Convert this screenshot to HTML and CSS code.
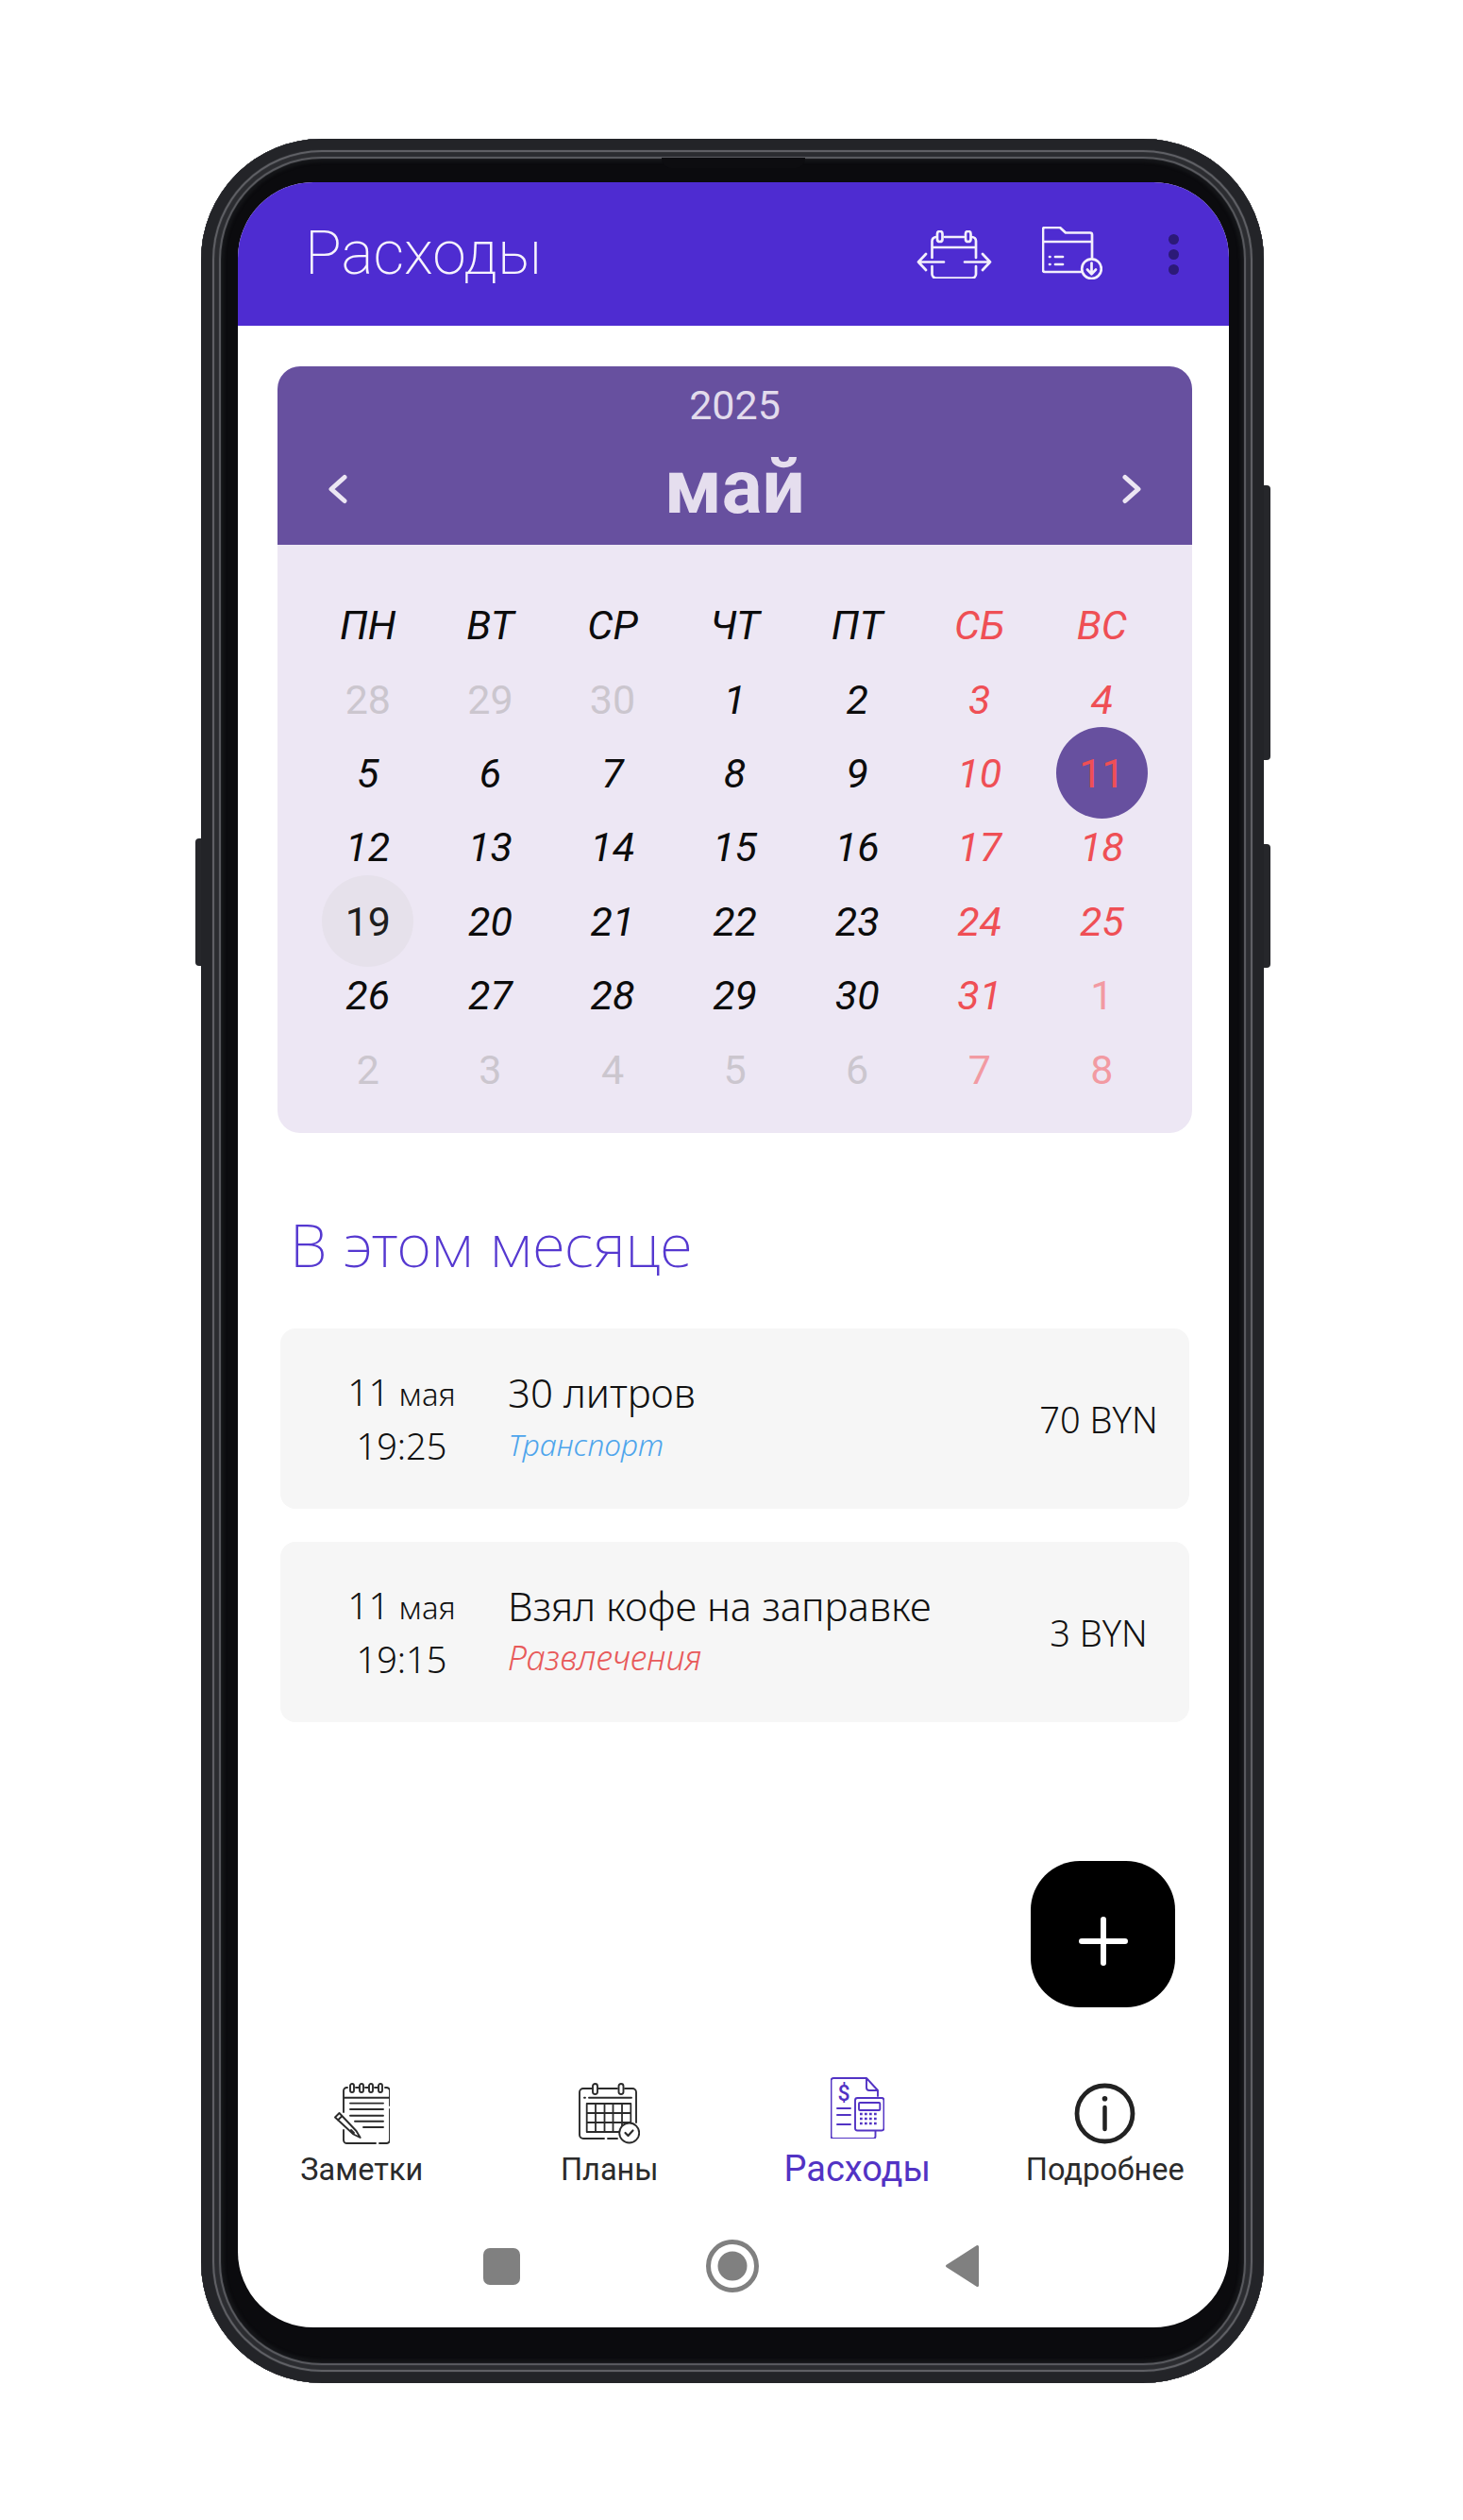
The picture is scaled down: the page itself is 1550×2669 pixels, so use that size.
FILE: index.html
```html
<!DOCTYPE html>
<html lang="ru">
<head>
<meta charset="utf-8">
<title>Расходы</title>
<link rel="stylesheet" href="styles.css">
</head>
<body>
<div class="phone">
  <span class="btn btn-left"></span>
  <span class="btn btn-right1"></span>
  <span class="btn btn-right2"></span>
  <span class="notch"></span>
  <div class="screen">
    <header class="appbar">
      <h1 class="appbar-title">Расходы</h1>
      <svg class="ic-cal" viewBox="0 0 80 51" width="80" height="51" fill="none" stroke="#f3effc" stroke-width="2.700" stroke-linecap="round" stroke-linejoin="round">
        <path d="M21 7h-.2a4.3 4.3 0 0 0-4.3 4.3V29M16.500 38v8.200a4.300 4.300 0 0 0 4.300 4.300h37.900a4.300 4.300 0 0 0 4.300-4.300V38M63 29V11.300A4.300 4.300 0 0 0 58.700 7H58M30 7h20M16.500 18H63"/>
        <rect x="22" y="1" width="5.500" height="11" rx="2.700"/>
        <rect x="52" y="1" width="5.500" height="11" rx="2.700"/>
        <path d="M29 33.500H2M10 25l-8 8.500 8 8.500M51 33.500h27M70 25l8 8.500-8 8.500"/>
      </svg>
      <svg class="ic-folder" viewBox="0 0 64 56" width="64" height="56" fill="none" stroke="#f3effc" stroke-width="2.700" stroke-linecap="round" stroke-linejoin="round">
        <path d="M41 48H3a2 2 0 0 1-2-2V3a2 2 0 0 1 2-2h16l6 5.500h26a2 2 0 0 1 2 2V33M1 16h52M14 32h8M14 40h8M8 32h.5M8 40h.5"/>
        <circle cx="52.500" cy="44.700" r="10.300"/>
        <path d="M52.500 38.500V50M48 45.500l4.500 4.800 4.500-4.800"/>
      </svg>
      <div class="dots"><i></i><i></i><i></i></div>
    </header>

    <section class="calendar">
      <div class="cal-head">
        <div class="cal-year">2025</div>
        <div class="cal-month-row">
          <svg class="chev" viewBox="0 0 22 34" width="22" height="34" fill="none" stroke="#ece6f3" stroke-width="5" stroke-linecap="round" stroke-linejoin="round"><path d="M18 4.500L4 17l14 12.500"/></svg>
          <div class="cal-month">май</div>
          <svg class="chev" viewBox="0 0 22 34" width="22" height="34" fill="none" stroke="#ece6f3" stroke-width="5" stroke-linecap="round" stroke-linejoin="round"><path d="M4 4.500L18 17 4 29.500"/></svg>
        </div>
      </div>
      <div class="cal-grid">
        <div class="c">ПН</div><div class="c">ВТ</div><div class="c">СР</div><div class="c">ЧТ</div><div class="c">ПТ</div><div class="c r">СБ</div><div class="c r">ВС</div>
        <div class="c o">28</div><div class="c o">29</div><div class="c o">30</div><div class="c">1</div><div class="c">2</div><div class="c r">3</div><div class="c r">4</div>
        <div class="c">5</div><div class="c">6</div><div class="c">7</div><div class="c">8</div><div class="c">9</div><div class="c r">10</div><div class="c sel"><span>11</span></div>
        <div class="c">12</div><div class="c">13</div><div class="c">14</div><div class="c">15</div><div class="c">16</div><div class="c r">17</div><div class="c r">18</div>
        <div class="c today"><span>19</span></div><div class="c">20</div><div class="c">21</div><div class="c">22</div><div class="c">23</div><div class="c r">24</div><div class="c r">25</div>
        <div class="c">26</div><div class="c">27</div><div class="c">28</div><div class="c">29</div><div class="c">30</div><div class="c r">31</div><div class="c ro">1</div>
        <div class="c o">2</div><div class="c o">3</div><div class="c o">4</div><div class="c o">5</div><div class="c o">6</div><div class="c ro">7</div><div class="c ro">8</div>
      </div>
    </section>

    <h2 class="section-title">В этом месяце</h2>

    <div class="items">
      <article class="item">
        <div class="item-date"><div><span class="d">11</span> <span class="m">мая</span></div><div>19:25</div></div>
        <div class="item-main"><div class="item-title">30 литров</div><div class="item-cat blue">Транспорт</div></div>
        <div class="item-sum">70 BYN</div>
      </article>
      <article class="item">
        <div class="item-date"><div><span class="d">11</span> <span class="m">мая</span></div><div>19:15</div></div>
        <div class="item-main"><div class="item-title">Взял кофе на заправке</div><div class="item-cat red">Развлечения</div></div>
        <div class="item-sum">3 BYN</div>
      </article>
    </div>

    <div class="fab-row">
      <button class="fab" type="button" aria-label="Добавить">
        <svg viewBox="0 0 52 52" width="52" height="52" fill="none" stroke="#fff" stroke-width="6" stroke-linecap="round"><path d="M26 3v46M3 26h46"/></svg>
      </button>
    </div>

    <nav class="tabs">
      <a class="tab">
        <span class="tab-ic">
        <svg viewBox="0 0 60 65" width="60" height="65" fill="none" stroke="#2b2b2b" stroke-width="1.900" stroke-linecap="round" stroke-linejoin="round">
          <path d="M15 5h-.5A3.500 3.500 0 0 0 11 8.500V31M11 50v10.500a3.500 3.500 0 0 0 3.500 3.500H45M49 64h7.500a3.500 3.500 0 0 0 3.500-3.500V28M60 24V8.500A3.500 3.500 0 0 0 56.500 5H55M11 15.700h49"/>
          <path d="M24 5h3M34 5h3M44 5h3"/>
          <rect x="18" y="1" width="4" height="9" rx="2"/><rect x="28" y="1" width="4" height="9" rx="2"/><rect x="38" y="1" width="4" height="9" rx="2"/><rect x="48" y="1" width="4" height="9" rx="2"/>
          <path d="M18 21.600h35M18 28h35M18 34.700h35M23 40.700h30M32 47h21"/>
          <path d="M2 36.500L6.500 32l18 19 4.200 7-7.200-3.500zM5 39.500l4.500-4.500M19 50l3 3" fill="#fff"/>
        </svg>
        </span>
        <span class="tab-label">Заметки</span>
      </a>
      <a class="tab">
        <span class="tab-ic">
        <svg viewBox="0 0 65 65" width="65" height="65" fill="none" stroke="#2b2b2b" stroke-width="1.900" stroke-linecap="round" stroke-linejoin="round">
          <path d="M14 6H5a4 4 0 0 0-4 4v45a4 4 0 0 0 4 4h22M31 59h10M21 6h20M49 6h8a4 4 0 0 1 4 4v32"/>
          <rect x="15" y="1" width="5" height="11" rx="2.500"/><rect x="42.500" y="1" width="5" height="11" rx="2.500"/>
          <path d="M6 15.700h1M11 15.700h45"/>
          <path d="M8.700 22h46.600v30H8.700zM18 22v30M27.500 22v30M36.500 22v30M46 22v30M8.700 32h46.600M8.700 42h46.600" stroke-width="1.800"/>
          <circle cx="53.700" cy="53" r="10.500" fill="#fff"/>
          <path d="M49.500 53l3 3 5-5.500" stroke-width="2.200"/>
        </svg>
        </span>
        <span class="tab-label">Планы</span>
      </a>
      <a class="tab active">
        <span class="tab-ic tab-ic-up">
        <svg viewBox="0 0 57 65" width="57" height="65" fill="none" stroke="#5233c4" stroke-width="1.900" stroke-linecap="round" stroke-linejoin="round">
          <path d="M38 1H3a2.500 2.500 0 0 0-2.500 2.500v59A2.500 2.500 0 0 0 3 65h42a2.500 2.500 0 0 0 2.500-2.500V57M38 1l12 13v6M38 1v10a3 3 0 0 0 3 3h9"/>
          <rect x="26" y="22" width="30.500" height="34.500" rx="2.500"/>
          <rect x="30" y="27" width="22.300" height="8" rx="1"/>
          <path d="M31 39h20M31 44h20M31 49h20" stroke-width="2.400" stroke-linecap="butt" stroke-dasharray="2.700 2.300"/>
          <path d="M7 33h14M7 40h14M7 50h14"/>
          <text class="dollar" x="14" y="25" text-anchor="middle">$</text>
        </svg>
        </span>
        <span class="tab-label">Расходы</span>
      </a>
      <a class="tab">
        <span class="tab-ic">
        <svg viewBox="0 0 65 65" width="65" height="65" fill="none" stroke="#222" stroke-width="4.800" stroke-linecap="round">
          <circle cx="32.500" cy="32.500" r="29.500"/>
          <path d="M32.500 26v23" stroke-width="4.500"/>
          <circle cx="32.500" cy="16.700" r="2.800" fill="#222" stroke="none"/>
        </svg>
        </span>
        <span class="tab-label">Подробнее</span>
      </a>
    </nav>

    <div class="sysnav">
      <span class="sys-square"></span>
      <svg viewBox="0 0 56 56" width="56" height="56"><circle cx="28" cy="28" r="25.500" fill="none" stroke="#808080" stroke-width="5"/><circle cx="28" cy="28" r="15.500" fill="#808080"/></svg>
      <svg viewBox="0 0 37 46" width="37" height="46"><path d="M34.500 2.500v41L2.500 23z" fill="#808080" stroke="#808080" stroke-width="3" stroke-linejoin="round"/></svg>
    </div>
  </div>
</div>
</body>
</html>
```
FILE: styles.css
```css
* { box-sizing: border-box; }
html, body { margin: 0; padding: 0; background: #fff; }
body { height: 2669px; overflow: hidden; font-family: "Roboto", "Liberation Sans", sans-serif; }

.phone {
  position: relative;
  width: 1126px;
  height: 2377px;
  margin: 147px 0 0 213px;
  padding: 46px 37px 59px 39px;
  border-radius: 128px;
  background: #0b0b0e;
  box-shadow:
    inset 0 0 1px 12px #232428,
    inset 0 0 1px 14px #66676c,
    inset 0 0 1px 19px #2b2c30,
    inset 0 0 1px 21px #5f6065,
    inset 0 0 3px 25px #141518;
}
.btn { position: absolute; width: 6px; background: #26272b; }
.btn-left { left: -6px; top: 741px; height: 135px; border-radius: 4px 0 0 4px; }
.btn-right1 { right: -7px; top: 367px; height: 291px; width: 7px; border-radius: 0 4px 4px 0; }
.btn-right2 { right: -7px; top: 747px; height: 131px; width: 7px; border-radius: 0 4px 4px 0; }
.notch {
  position: absolute; left: 488px; top: 20px; width: 152px; height: 11px;
  background: #0d0d10; border-radius: 0 0 10px 10px;
}

.screen {
  display: flex; flex-direction: column;
  width: 1050px; height: 2272px;
  background: #fff; border-radius: 80px; overflow: hidden;
}

.appbar {
  flex: none; display: flex; align-items: center;
  height: 152px; background: #4e2cd1; padding: 0 0 0 71px;
}
.appbar-title {
  margin: 0; flex: 1;
  font-size: 64px; font-weight: 200; color: #f6f3fd; line-height: 1;
}
.ic-cal { margin-right: 53px; }
.ic-folder { margin-right: 70px; margin-top: -2px; }
.dots { display: flex; flex-direction: column; gap: 5px; margin-right: 53px; }
.dots i { display: block; width: 11px; height: 11px; border-radius: 50%; background: #2c1a78; }

.calendar {
  flex: none; width: 969px; height: 812px;
  margin: 43px 0 0 42px;
  background: #ede7f4; border-radius: 24px; overflow: hidden;
}
.cal-head { height: 189px; background: #67509f; padding-top: 15px; text-align: center; }
.cal-year { font-size: 43px; line-height: 52px; color: #e2dbec; }
.cal-month-row {
  display: flex; align-items: center; justify-content: space-between;
  margin-top: 16px; padding: 0 53px 0 53px; height: 90px;
}
.chev { margin-top: 3px; }
.cal-month { font-size: 80px; font-weight: 700; line-height: 90px; color: #e5deee; }

.cal-grid {
  display: grid;
  grid-template-columns: repeat(7, 129.600px);
  grid-auto-rows: 78.400px;
  padding: 46px 0 0 31px;
}
.c {
  display: flex; align-items: center; justify-content: center;
  font-size: 43px; font-style: italic; font-weight: 380; color: #0c0c0c;
}
.c.r { color: #ef4f55; }
.c.o { color: #cbc6ce; font-style: normal; font-weight: 400; }
.c.ro { color: #f29aa2; font-style: normal; font-weight: 400; }
.c.sel, .c.today { position: relative; font-style: normal; font-weight: 400; }
.c.sel { color: #ef4f55; }
.c.sel span, .c.today span {
  display: flex; align-items: center; justify-content: center;
  width: 97px; height: 97px; border-radius: 50%; flex: none;
}
.c.sel span { background: #67509f; }
.c.today span { background: #e6e1eb; color: #1e1e1e; }

.section-title {
  margin: 76px 0 0 55px;
  font-family: "Noto Sans", sans-serif; font-weight: 200;
  font-size: 63.500px; line-height: 84px; color: #5538d0;
}

.items { display: flex; flex-direction: column; gap: 35px; margin: 47px 0 0 45px; width: 963px; }
.item {
  display: flex; align-items: center; height: 191px;
  background: #f6f6f6; border-radius: 16px;
  font-family: "Noto Sans", sans-serif; font-weight: 300; color: #111;
}
.item-date { flex: none; width: 241px; padding-left: 16px; text-align: center; font-size: 38px; line-height: 55px; }
.item-date .d { font-size: 39px; }
.item-date .m { font-size: 33px; }
.item-main { flex: 1; }
.item-title { font-size: 42px; line-height: 52px; }
.item-cat { line-height: 52px; font-style: italic; padding-top: 3px; }
.item-cat.blue { color: #4ea5ec; font-size: 32px; }
.item-cat.red { color: #e85a5a; font-size: 36px; }
.item-sum { flex: none; width: 192px; text-align: center; font-size: 38px; }

.fab-row { flex: 1; display: flex; justify-content: flex-end; align-items: flex-end; padding-right: 57px; }
.fab {
  display: flex; align-items: center; justify-content: center;
  width: 153px; height: 155px; padding: 14px 0 0; border: 0;
  background: #000; border-radius: 52px;
}

.tabs { flex: none; display: grid; grid-template-columns: repeat(4, 1fr); margin-top: 80px; height: 129px; }
.tab { display: flex; flex-direction: column; align-items: center; color: #2b2b2b; font-size: 32.500px; }
.tab-ic { display: block; height: 65px; }
.tab-ic svg { display: block; }
.tab-ic-up { margin-top: -6px; }
.tab-label { margin-top: 7px; line-height: 40px; }
.tab.active { color: #5233c4; }
.tab.active .tab-label { font-size: 38px; margin-top: 11px; line-height: 42px; }
.dollar { font-family: "Roboto", sans-serif; font-size: 23px; font-weight: 500; fill: #5233c4; stroke: none; }

.sysnav {
  flex: none; height: 130px;
  display: grid; grid-template-columns: 39px 56px 37px; justify-content: start; align-items: center;
  column-gap: 197px; padding: 0 0 0 260px;
}
.sys-square { width: 39px; height: 39px; border-radius: 7px; background: #808080; }
```
